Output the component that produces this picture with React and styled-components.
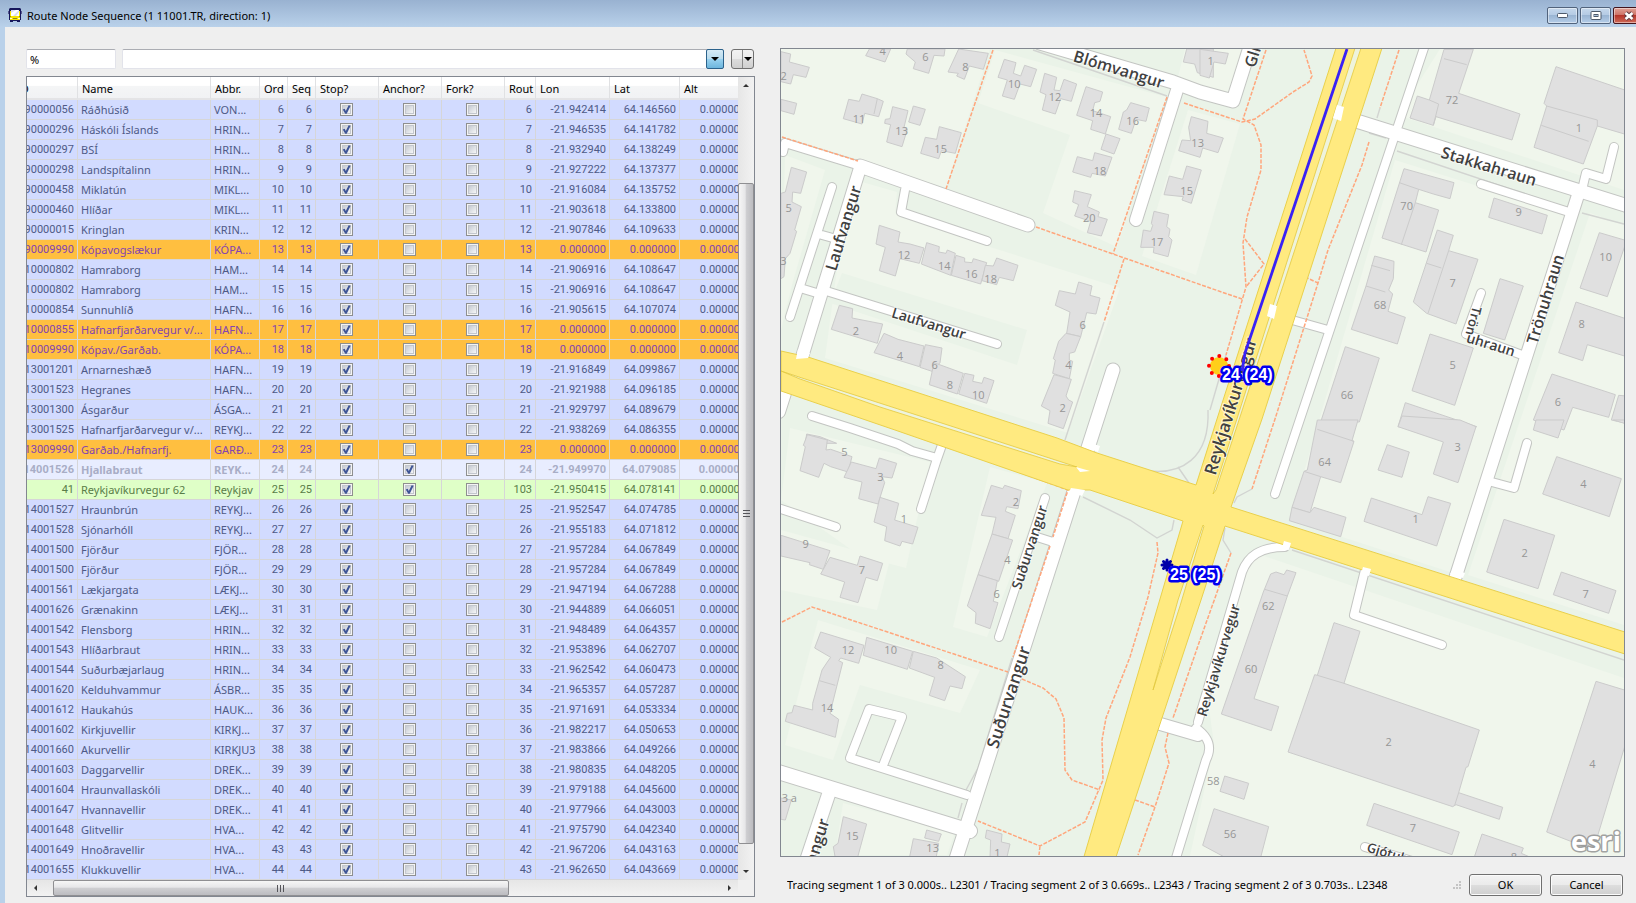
import React from 'react'
import styled, { createGlobalStyle, css } from 'styled-components'

const GlobalStyle = createGlobalStyle`
    * {
        box-sizing: border-box;
    }
    body {
        margin: 0;
        background: #efefef;
        font-family: "Noto Sans", "Open Sans", sans-serif;
        font-size: 11px;
        color: #000;
    }
    button, input, select {
        font: inherit;
        color: inherit;
    }
`;

/* ---------- window frame ---------- */

const Window = styled.div`
    display: flex;
    flex-direction: column;
    min-height: 100vh;
`;

const TitleBar = styled.header`
    display: flex;
    align-items: center;
    height: 27px;
    padding: 4px 0 0 8px;
    overflow: hidden;
    background: linear-gradient(#99b2d1, #b9d1ea);
`;

const Title = styled.h1`
    flex: 1;
    margin: 0 0 0 5px;
    font-size: 11px;
    font-weight: 400;
    line-height: 16px;
    white-space: nowrap;
`;

const WindowButtons = styled.div`
    display: flex;
    gap: 2px;
    flex: none;
    margin-right: -20px;
`;

const WindowButton = styled.button`
    display: flex;
    align-items: center;
    justify-content: center;
    width: ${({ $close }) => $close ? '43px' : '31px'};
    height: 17px;
    padding: 0 ${({ $close }) => $close ? '12px' : '0'} 0 0;
    border: 1px solid ${({ $close }) => $close ? '#43141c' : '#51637c'};
    border-radius: 2px;
    background: ${({ $close }) => $close
        ? 'linear-gradient(#e0a297 0%, #cf7468 45%, #b5352a 50%, #cf6a58 100%)'
        : 'linear-gradient(#c6d8ec 0%, #b5cbe4 45%, #9ab5d3 50%, #b4cde8 100%)'};
    box-shadow: inset 0 0 0 1px rgba(255, 255, 255, .45);
`;

const Body = styled.main`
    display: grid;
    flex: 1;
    grid-template-columns: minmax(0, 729fr) minmax(0, 845fr);
    gap: 25px;
    padding: 21px 11px 6px 21px;
    border-left: 5px solid #b9d1ea;
`;

const Panel = styled.section`
    display: flex;
    flex-direction: column;
    min-width: 0;
`;

/* ---------- filter bar ---------- */

const FilterBar = styled.div`
    display: flex;
    gap: 6px;
    padding: 1px 0 7px;
`;

const FilterInput = styled.input`
    width: 90px;
    height: 20px;
    padding: 1px 3px 0;
    border: 1px solid #e2e3ea;
    border-top-color: #abadb3;
    border-radius: 2px;
    background: #fff;
    outline: none;
`;

const Combo = styled.div`
    position: relative;
    flex: 1;
    height: 20px;
`;

const ComboSelect = styled.select`
    appearance: none;
    width: 100%;
    height: 20px;
    padding: 0 20px 0 4px;
    border: 1px solid #e2e3ea;
    border-top-color: #abadb3;
    border-radius: 2px;
    background: #fff;
    outline: none;
`;

const ComboArrow = styled.span`
    position: absolute;
    top: 0;
    right: 0;
    display: flex;
    align-items: center;
    justify-content: center;
    width: 18px;
    height: 20px;
    border: 1px solid #2c628b;
    border-radius: 2px;
    background: linear-gradient(#d6eaf5 0%, #b9dcee 48%, #98d1ef 52%, #6db6dd 100%);
    pointer-events: none;
`;

const SplitButton = styled.button`
    display: flex;
    align-items: center;
    width: 23px;
    height: 20px;
    margin: 0 1px;
    padding: 0;
    border: 1px solid #707070;
    border-radius: 3px;
    background: linear-gradient(#f2f2f2 0%, #ebebeb 48%, #dcdcdc 52%, #cfcfcf 100%);

    &:before {
        content: "";
        width: 10px;
        height: 100%;
        margin-right: 1px;
        border-right: 1px solid #8a8a8a;
    }
`;

/* ---------- grid ---------- */

const GridFrame = styled.div`
    display: grid;
    grid-template-columns: minmax(0, 1fr) 16px;
    border: 1px solid #828790;
    background: #fff;
`;

const GridView = styled.div`
    overflow: hidden;
`;

const NodeTable = styled.table`
    width: 737px;
    margin-left: -14px;
    border-collapse: separate;
    border-spacing: 0;
    table-layout: fixed;
`;

const HeadCell = styled.th`
    height: 23px;
    padding: 2px 0 0 4px;
    overflow: hidden;
    border-right: 1px solid #e0e1e3;
    border-bottom: 2px solid #e4e4e6;
    background: linear-gradient(#fff 0%, #fff 40%, #f4f5f6 45%, #f1f2f4 100%);
    font-size: 11px;
    font-weight: 400;
    line-height: 16px;
    text-align: left;
    white-space: nowrap;
`;

const Cell = styled.td`
    height: 20px;
    padding: ${({ $center }) => $center ? '0 4px 0 3px' : '0 3px'};
    overflow: hidden;
    border-right: 1px solid #d6d6d8;
    border-bottom: 1px solid #d6d6d8;
    font-family: ${({ $num }) => $num ? 'Roboto, sans-serif' : 'inherit'};
    font-size: 11px;
    line-height: 18px;
    text-align: ${({ $num }) => $num ? 'right' : 'left'};
    white-space: nowrap;
`;

const tones = {
    normal: css`
        background: #d2dbff;
        color: #4e5a86;
    `,
    missing: css`
        background: #ffbf40;
        color: #8344b0;
    `,
    current: css`
        background: #e8edff;
        color: #a8adc6;
        font-weight: 700;
    `,
    added: css`
        background: #dfffc7;
        color: #597d48;
    `,
};

const Row = styled.tr`
    ${({ $tone }) => tones[$tone]}
`;

const Check = styled.input`
    appearance: none;
    display: block;
    position: relative;
    width: 13px;
    height: 13px;
    margin: 0 auto;
    border: 1px solid #8e8f8f;
    background: linear-gradient(135deg, #b9bec8, #f4f5f6 80%);
    box-shadow: inset 0 0 0 1px #f4f4f4, inset 0 0 0 2px #c3c7ce;

    &:checked:after {
        content: "";
        position: absolute;
        inset: 1px;
        background: #3f5596;
        clip-path: polygon(8% 50%, 30% 42%, 42% 66%, 74% 4%, 96% 8%, 52% 98%, 36% 98%);
    }
`;

/* ---------- scroll bars ---------- */

const ScrollBar = styled.div`
    display: flex;
    flex-direction: ${({ $vertical }) => $vertical ? 'column' : 'row'};
    background: ${({ $vertical }) => $vertical
        ? 'linear-gradient(90deg, #e6e6e6, #f2f2f2)'
        : 'linear-gradient(#e6e6e6, #f2f2f2)'};
`;

const ScrollArrow = styled.button`
    display: flex;
    flex: none;
    align-items: center;
    justify-content: center;
    width: 16px;
    height: 16px;
    padding: 0;
    border: 0;
    background: none;
`;

const ScrollTrack = styled.div`
    display: flex;
    flex: 1;
    flex-direction: ${({ $vertical }) => $vertical ? 'column' : 'row'};
`;

const ScrollGap = styled.div`
    flex: ${({ $size }) => $size} 0 0;
`;

const ScrollThumb = styled.div`
    display: flex;
    flex: ${({ $size }) => $size} 0 0;
    align-items: center;
    justify-content: center;
    border: 1px solid #8f8f92;
    border-radius: 2px;
    background: linear-gradient(${({ $vertical }) => $vertical ? '90deg' : '180deg'}, #f6f6f6 0%, #e6e6e8 45%, #cfcfd2 50%, #bcbcc0 100%);
`;

const Corner = styled.div`
    background: #f0f0f0;
`;

/* ---------- map and footer ---------- */

const MapFrame = styled.div`
    display: flex;
    flex: 1;
    min-height: 400px;
    border: 1px solid #828790;
    background: #eaf3e8;
`;

const MapView = styled.svg`
    display: block;
    flex: 1;
    width: 0;
    min-width: 0;
    font-family: "Open Sans", "Noto Sans", sans-serif;
`;

const Footer = styled.footer`
    display: flex;
    align-items: center;
    gap: 8px;
    padding: 17px 2px 1px 7px;
`;

const Status = styled.p`
    flex: 1;
    margin: 0;
    overflow: hidden;
    line-height: 22px;
    white-space: nowrap;
`;

const DialogButton = styled.button`
    width: 73px;
    height: 22px;
    padding: 0;
    border: 1px solid #707070;
    border-radius: 3px;
    background: linear-gradient(#f3f3f3 0%, #ebebeb 48%, #dddddd 52%, #cfcfcf 100%);
    box-shadow: inset 0 0 0 1px #fbfbfb;
    line-height: 18px;
`;

/* ---------- data ---------- */

const columns = [
    ['ID', 65], ['Name', 133], ['Abbr.', 49], ['Ord', 28], ['Seq', 28], ['Stop?', 63],
    ['Anchor?', 63], ['Fork?', 63], ['Rout', 31], ['Lon', 74], ['Lat', 70], ['Alt', 70],
];

// id, name, abbreviation, order, route order, lon, lat, tone
const nodes = [
    ['90000056', 'Ráðhúsið', 'VON...', 6, 6, '-21.942414', '64.146560'],
    ['90000296', 'Háskóli Íslands', 'HRIN...', 7, 7, '-21.946535', '64.141782'],
    ['90000297', 'BSÍ', 'HRIN...', 8, 8, '-21.932940', '64.138249'],
    ['90000298', 'Landspítalinn', 'HRIN...', 9, 9, '-21.927222', '64.137377'],
    ['90000458', 'Miklatún', 'MIKL...', 10, 10, '-21.916084', '64.135752'],
    ['90000460', 'Hlíðar', 'MIKL...', 11, 11, '-21.903618', '64.133800'],
    ['90000015', 'Kringlan', 'KRIN...', 12, 12, '-21.907846', '64.109633'],
    ['90009990', 'Kópavogslækur', 'KÓPA...', 13, 13, '0.000000', '0.000000', 'missing'],
    ['10000802', 'Hamraborg', 'HAM...', 14, 14, '-21.906916', '64.108647'],
    ['10000802', 'Hamraborg', 'HAM...', 15, 15, '-21.906916', '64.108647'],
    ['10000854', 'Sunnuhlíð', 'HAFN...', 16, 16, '-21.905615', '64.107074'],
    ['10000855', 'Hafnarfjarðarvegur v/...', 'HAFN...', 17, 17, '0.000000', '0.000000', 'missing'],
    ['10009990', 'Kópav./Garðab.', 'KÓPA...', 18, 18, '0.000000', '0.000000', 'missing'],
    ['13001201', 'Arnarneshæð', 'HAFN...', 19, 19, '-21.916849', '64.099867'],
    ['13001523', 'Hegranes', 'HAFN...', 20, 20, '-21.921988', '64.096185'],
    ['13001300', 'Ásgarður', 'ÁSGA...', 21, 21, '-21.929797', '64.089679'],
    ['13001525', 'Hafnarfjarðarvegur v/...', 'REYKJ...', 22, 22, '-21.938269', '64.086355'],
    ['13009990', 'Garðab./Hafnarfj.', 'GARÐ...', 23, 23, '0.000000', '0.000000', 'missing'],
    ['14001526', 'Hjallabraut', 'REYK...', 24, 24, '-21.949970', '64.079085', 'current'],
    ['41', 'Reykjavíkurvegur 62', 'Reykjav', 25, 103, '-21.950415', '64.078141', 'added'],
    ['14001527', 'Hraunbrún', 'REYKJ...', 26, 25, '-21.952547', '64.074785'],
    ['14001528', 'Sjónarhóll', 'REYKJ...', 27, 26, '-21.955183', '64.071812'],
    ['14001500', 'Fjörður', 'FJÖR...', 28, 27, '-21.957284', '64.067849'],
    ['14001500', 'Fjörður', 'FJÖR...', 29, 28, '-21.957284', '64.067849'],
    ['14001561', 'Lækjargata', 'LÆKJ...', 30, 29, '-21.947194', '64.067288'],
    ['14001626', 'Grænakinn', 'LÆKJ...', 31, 30, '-21.944889', '64.066051'],
    ['14001542', 'Flensborg', 'HRIN...', 32, 31, '-21.948489', '64.064357'],
    ['14001543', 'Hlíðarbraut', 'HRIN...', 33, 32, '-21.953896', '64.062707'],
    ['14001544', 'Suðurbæjarlaug', 'HRIN...', 34, 33, '-21.962542', '64.060473'],
    ['14001620', 'Kelduhvammur', 'ÁSBR...', 35, 34, '-21.965357', '64.057287'],
    ['14001612', 'Haukahús', 'HAUK...', 36, 35, '-21.971691', '64.053334'],
    ['14001602', 'Kirkjuvellir', 'KIRKJ...', 37, 36, '-21.982217', '64.050653'],
    ['14001660', 'Akurvellir', 'KIRKJU3', 38, 37, '-21.983866', '64.049266'],
    ['14001603', 'Daggarvellir', 'DREK...', 39, 38, '-21.980835', '64.048205'],
    ['14001604', 'Hraunvallaskóli', 'DREK...', 40, 39, '-21.979188', '64.045600'],
    ['14001647', 'Hvannavellir', 'DREK...', 41, 40, '-21.977966', '64.043003'],
    ['14001648', 'Glitvellir', 'HVA...', 42, 41, '-21.975790', '64.042340'],
    ['14001649', 'Hnoðravellir', 'HVA...', 43, 42, '-21.967206', '64.043163'],
    ['14001655', 'Klukkuvellir', 'HVA...', 44, 43, '-21.962650', '64.043669'],
];

const blocks = [
    '781,49 990,49 946,188 860,160 781,136',
    '995,50 1166,97 1117,247 1043,213 1070,135 978,103',
    '862,182 897,192 895,213 990,247 1120,288 1068,433 825,358 838,262',
    '1185,49 1243,49 1228,93 1178,77',
    '1188,110 1240,124 1196,275 1142,256',
    '785,155 825,170 792,285 781,330',
    '790,428 930,462 906,568 860,556 781,500',
    '781,530 890,560 877,610 781,590',
    '990,467 1047,483 987,637 953,627',
    '818,620 980,670 960,713 860,685 833,760 785,745',
    '843,803 955,833 947,855 835,855',
    '1440,49 1624,49 1624,190 1398,115',
    '1395,160 1570,215 1450,572 1290,520',
    '1590,213 1624,225 1624,625 1468,575',
    '1252,552 1624,678 1624,856 1190,856 1214,745 1208,700',
];

const greens = ['842,273 1027,330 1017,365 830,303'];

// [path, width]
const streets = [
    ['M1040 43 1173 82 1200 92 1233 101 1251 44', 13],
    ['M1177 90 1136 220', 12],
    ['M783 152 785 143 857 165', 8],
    ['M860 166 1028 225', 13],
    ['M860 168 802 357', 12],
    ['M832 187 790 317M822 235 840 240M800 288 820 294', 8],
    ['M905 190 901 212 987 241', 8],
    ['M823 290 997 344', 8],
    ['M1113 370 955 862', 13],
    ['M786 390 779 412', 12],
    ['M812 416 850 428 898 444 912 451 937 458M943 442 936 462 921 509', 8],
    ['M778 508 836 527', 8],
    ['M1045 498 999 637M1037 537 1056 543', 8],
    ['M967 795 850 758 869 709 902 717 884 763', 8],
    ['M778 772 970 831', 14],
    ['M830 790 806 862', 13],
    ['M1425 45 1275 494', 8],
    ['M1350 119 1628 206', 13],
    ['M1582 190 1586 173 1606 179 1614 147', 8],
    ['M1578 195 1454 582', 12],
    ['M1481 184 1572 213', 8],
    ['M1481 293 1466 334 1522 355', 8],
    ['M1285 318 1328 330', 8],
    ['M1527 443 1514 488 1488 481', 8],
    ['M1367 562 1354 615 1442 645', 8],
    ['M1288 538 1285 547C1260 547 1248 556 1242 572L1198 722M1196 728C1210 738 1212 748 1206 760L1176 858', 8],
    ['M1150 721 1198 735', 12],
    ['M1365 847 1412 861', 8],
];

const mainRoads = [
    '781,351 808,357 1057,438 1097,453 1196,485 1217,419 1337,45 1383,45 1262,419 1231,507 1628,633 1628,655 1225,526 1201,600 1115,860 1083,860 1183,521 1090,490 1068,490 895,430 781,391',
];

const medians = [
    '1356,45 1362,45 1216,490 1213,494',
    '781,371 802,378 957,428 1077,467 1060,464 880,407 800,379',
    '1203,525 1204,526 1180,606 1153,690 1178,600',
];

const footpaths = [
    'M993 50 946 189', 'M782 137 858 161', 'M1167 97 1113 254', 'M1036 227 1113 254 1210 288 1242 299',
    'M1124 259 1104 322', 'M1184 103 1242 122 1255 119 1293 92 1309 82 1312 76 1304 50',
    'M1266 50 1243 119 1254 125 1261 145 1261 170 1247 217 1243 243 1246 287 1226 355',
    'M1245 239 1264 264 1246 287', 'M1399 50 1380 108', 'M1369 142 1362 165 1328 250 1318 283 1275 419 1252 489',
    'M1305 277 1318 283', 'M782 622 812 607 1008 672', 'M1022 679 1043 688 1056 699 1064 718 1065 770 1072 780 1100 790',
    'M967 453 1068 490 1053 537M1050 546 1013 657', 'M1157 542 1158 553 1148 597 1130 657 1106 718 1102 740 1103 780 1085 822 1040 846 978 821M1040 846 1039 855',
    'M1231 553 1200 640 1173 718', 'M1168 733 1165 747 1169 763 1155 807 1138 855', 'M1135 800 1155 807',
];

const trails = [
    'M1033 50 1167 96', 'M1104 322 1065 440', 'M1208 410C1210 460 1180 474 1150 471M1178 467 1189 483',
    'M1083 497 1130 520 1157 538 1172 530 1174 520', 'M1397 151 1567 208M1582 213 1624 224', 'M1292 550 1624 660',
    'M1380 108 1377 118M1369 133 1386 138', 'M1252 489 1237 497 1234 503', 'M1231 553 1223 540 1225 528', 'M1226 355 1210 410',
    'M1012 658 978 768 966 790', 'M962 803 958 818',
];

const sheets = [
    {
        x: 770, y: 40,
        buildings: [
            '33,35 62,42 58,66 118,82 108,112 70,104 62,132 33,125', '33,178 80,190 72,223 33,212', '298,27 362,27 345,66 287,47',
            '412,27 525,27 522,48 492,46 476,100 430,86 436,66 408,42', '566,27 655,40 640,88 598,78 583,118 560,108 565,100 534,96',
            '703,58 738,68 730,100 752,108 764,76 800,88 782,140 750,132 733,178 697,168 712,120 684,112',
            '824,100 860,112 852,150 870,152 882,118 920,132 904,184 872,176 856,222 817,210 828,164 810,156',
            '948,140 998,156 990,184 974,188 968,212 1022,230 1006,282 962,268 968,242 920,226', '1008,282 1050,296 1032,342 993,328',
            '1082,188 1138,204 1128,244 1098,238 1084,280 1046,268 1060,216 1070,210', '1250,27 1330,27 1330,112 1282,98 1274,72 1240,66',
            '1264,230 1314,244 1310,280 1360,294 1344,338 1298,324 1290,352 1226,332 1236,300 1262,302 1256,262',
            '1250,378 1294,390 1264,490 1236,480 1240,470 1182,464 1198,408 1238,418',
            '1152,514 1196,524 1190,560 1200,568 1196,590 1206,600 1194,650 1150,638 1152,622 1112,622 1120,570 1142,574 1148,556 1144,550',
            '974,338 1026,352 1006,408 966,400 962,412 908,396 922,350 968,362',
            '914,452 964,464 952,500 988,516 984,530 1012,538 994,588 952,578 962,544 914,528 926,494 908,486',
            '276,162 322,176 340,184 326,230 284,220 276,252 220,236 236,178 268,184',
            '368,200 414,212 402,262 412,268 396,320 350,306 362,254 344,250 346,238 360,236', '430,198 466,208 450,256 416,246',
            '508,260 574,278 556,340 514,332 506,356 452,340 466,292 500,298',
            '64,382 110,396 92,460 68,456 66,486 94,500 74,570 80,574 60,640 46,656 42,710 33,716 33,460 46,456',
            '328,556 390,576 384,606 420,612 462,624 448,670 390,656 376,708 328,692 346,622 318,612',
            '470,608 508,620 506,636 528,640 532,630 556,640 542,706 454,672', '558,646 584,654 584,666 606,668 610,656 650,668 632,732 544,706',
            '646,676 670,678 680,654 744,676 730,722 688,712 680,734 636,722', '208,796 248,806 246,834 338,852 322,910 184,868',
            '342,880 384,898 462,918 448,980 312,938', '466,914 516,924 510,968 486,994 450,982', '492,968 580,1000 562,1062 478,1034',
            '584,1000 612,1006 608,1024 636,1030 642,1012 672,1022 650,1090 566,1062',
            '926,726 966,738 960,766 990,774 978,822 950,818 932,890 890,880 900,816 856,796 868,752 916,762',
            '888,880 932,890 914,936 898,940 898,960 908,964 898,1016 848,1000 856,960 850,956 866,904', '852,1004 904,1018 888,1068 896,1080 908,1086 880,1166 834,1150 840,1112 814,1098',
            '110,1182 150,1190 200,1210 106,1210',
        ],
        walls: ['322,176 312,222'],
        numbers: [
            ['2', 41, 106], ['4', 338, 32], ['6', 466, 48], ['8', 586, 78], ['10', 733, 131], ['12', 855, 170], ['14', 978, 216], ['16', 1088, 242],
            ['13', 1283, 306], ['15', 1250, 450], ['17', 1161, 605], ['18', 990, 392], ['20', 958, 532], ['11', 267, 234], ['13', 395, 272],
            ['15', 512, 325], ['5', 56, 502], ['3', 40, 662], ['12', 402, 642], ['14', 523, 675], ['16', 604, 700], ['18', 662, 714],
            ['2', 258, 870], ['4', 390, 946], ['6', 494, 974], ['8', 540, 1032], ['10', 625, 1062], ['6', 938, 854], ['4', 895, 974], ['2', 878, 1102],
        ],
    },
    {
        x: 1200, y: 0,
        buildings: [
            '0,148 85,160 76,192 42,186 28,234 0,226', '732,148 820,148 776,280 960,342 936,420 708,350 700,376 630,354 652,288 688,300',
            '1068,200 1280,272 1280,404 1192,378 1150,492 1002,442 1040,318 1032,310', '612,506 762,548 750,596 700,582 656,568 646,608 716,630 678,756 546,714',
            '882,594 1042,646 1026,702 866,652', '712,690 760,706 746,752 834,778 768,972 680,940 640,906',
            '524,768 582,784 580,836 566,870 578,882 564,934 616,952 592,1032 454,988 498,858', '900,836 970,858 914,1020 850,1000',
            '1198,698 1280,722 1222,890 1140,864', '1128,906 1280,957 1280,1070 1162,1034 1148,1082 1076,1058', '690,1002 820,1044 764,1216 636,1172',
            '436,1040 538,1074 478,1266 362,1266', '1056,1122 1246,1184 1226,1252 1118,1222 1092,1290 1000,1260', '1256,1186 1280,1188 1280,1270 1234,1260',
            '616,1208 830,1280 770,1290 594,1280',
        ],
        walls: [
            '732,176 800,194', '688,300 716,312 700,376', '1040,318 1192,360 1192,378', '1024,376 1166,424', '646,608 604,734', '598,548 656,568',
            '680,790 724,804', '746,752 684,940', '498,858 556,876', '514,796 570,812',
        ],
        numbers: [
            ['1', 32, 181], ['72', 756, 297], ['1', 1137, 382], ['70', 620, 616], ['9', 956, 635], ['7', 758, 848], ['68', 540, 912], ['10', 1217, 768],
            ['8', 1145, 969], ['5', 758, 1094], ['66', 441, 1183], ['6', 1074, 1203],
        ],
    },
    {
        x: 770, y: 430,
        buildings: [
            '112,14 172,30 168,60 182,58 246,80 234,126 182,110 162,100 146,142 90,122 106,50 100,46',
            '244,96 318,116 328,84 380,100 366,144 336,140 344,158 324,222 266,206 276,156 222,142',
            '330,202 386,220 374,270 444,292 428,342 396,334 390,348 344,332 350,290 312,276', '33,316 180,362 160,418 118,404 120,398 33,378',
            '180,382 262,406 270,378 338,400 322,452 288,442 264,518 210,502 224,456 152,432',
            '664,166 698,176 704,166 754,182 744,236 710,230 706,244 736,256 714,326 666,312 678,262 634,256', '666,312 728,330 686,454 624,434',
            '624,434 682,452 670,514 684,518 660,596 616,580 618,548 592,528', '152,606 282,646 266,700 212,684 206,692 218,698 180,850 206,868 196,922 46,874 52,850 66,848 72,826 128,840 128,820 156,720 172,696 182,682 134,654',
            '290,622 428,664 412,718 280,676', '430,664 500,684 586,740 576,776 540,768 524,812 478,796 494,742 418,714',
            '33,1104 64,1110 46,1170 33,1168', '220,1160 290,1182 262,1285 196,1285 190,1250 204,1240', '470,1200 514,1212 506,1234 464,1224',
            '430,1226 506,1240 498,1285 418,1285', '650,1200 696,1212 694,1236 720,1242 710,1285 660,1285 662,1230 646,1224',
        ],
        walls: ['148,752 196,766'],
        numbers: [
            ['5', 223, 64], ['3', 331, 139], ['1', 402, 265], ['9', 107, 341], ['7', 276, 418], ['2', 738, 213], ['4', 712, 387], ['6', 680, 490],
            ['12', 234, 658], ['10', 362, 657], ['8', 512, 703], ['14', 171, 832], ['3 a', 58, 1102], ['15', 247, 1215], ['13', 488, 1252], ['1', 682, 1266],
        ],
    },
    {
        x: 1200, y: 420,
        buildings: [
            '352,0 474,0 456,62 462,64 422,188 362,170 330,278 276,262 312,154 322,150', '276,262 330,278 342,262 438,292 422,350 268,302',
            '562,74 628,96 606,172 534,150', '606,-12 780,0 828,20 774,188 700,162 730,66 594,20', '514,234 666,284 684,230 752,250 710,378 492,304',
            '1008,0 1092,0 1074,54 1000,30', '1070,110 1264,176 1228,290 1028,222', '912,298 1064,346 1014,506 860,456', '1084,456 1248,512 1226,580 1060,524',
            '212,462 228,456 252,464 260,450 288,458 262,528 162,836 236,860 214,932 64,882 190,516',
            '402,608 480,634 432,790 838,930 804,1040 798,1042 776,1118 908,1162 898,1198 768,1154 758,1160 264,996 344,764 352,766',
            '74,1068 146,1090 132,1138 60,1114', '42,1166 206,1220 180,1320 90,1320 8,1276', '522,1150 778,1236 756,1304 500,1216',
            '1188,784 1280,812 1280,960 1180,1290 1040,1236', '846,1242 970,1284 964,1300 1010,1320 820,1320', '1240,0 1280,0 1280,12',
        ],
        walls: ['352,28 462,64', '312,154 362,170', '194,508 262,528', '352,766 432,790', '776,1118 764,1156'],
        numbers: [
            ['64', 374, 124], ['3', 773, 78], ['1', 647, 294], ['4', 1150, 191], ['2', 974, 396], ['7', 1157, 520], ['62', 205, 557], ['60', 153, 745],
            ['2', 566, 965], ['4', 1177, 1031], ['58', 40, 1081], ['56', 90, 1239], ['7', 639, 1223], ['8', 942, 1308],
        ],
    },
];

// text, x, y, angle, size
const streetNames = [
    ['Blómvangur', 1119, 69, 17, 16],
    ['Laufvangur', 843, 228, -73, 16],
    ['Laufvangur', 929, 323, 17, 14],
    ['Glitvangur', 1261, 28, -73, 16],
    ['Stakkahraun', 1489, 166, 17, 16],
    ['Trönuhraun', 1545, 299, -73, 16],
    ['Trön', 1474, 321, 104, 13],
    ['uhraun', 1491, 344, 17, 14],
    ['Reykjavíkurvegur', 1230, 406, -73, 17],
    ['Suðurvangur', 1029, 547, -72, 14],
    ['Suðurvangur', 1008, 697, -72, 17],
    ['Reykjavíkurvegur', 1218, 660, -73, 14],
    ['Laufvangur', 811, 861, -73, 16],
    ['Gjótuhraun', 1402, 857, 17, 13],
];

/* ---------- pieces ---------- */

const BusIcon = () => (
    <svg width="14" height="15" viewBox="0 0 14 15" aria-hidden="true">
        <path d="M2 0h10l1 1v11h-1v2H9v-1H5v1H2v-2H1V1z" fill="#17175c" />
        <path d="M0 3h1v3H0zM13 3h1v3h-1z" fill="#55558a" />
        <path d="M2 3h1v5h8V3h1v9H2z" fill="#f7e600" />
        <path d="M3 2h8v6H3z" fill="#d9dcf0" />
        <path d="M3 8V5l5-3h3L5 8zM8 8l3-4v4z" fill="#fff" />
        <path d="M5 10h4v1H5zM2 8h1v1H2zM11 8h1v1h-1z" fill="#8a8420" />
        <path d="M2 10h2v1H2zM10 10h2v1h-2z" fill="#fffde0" />
    </svg>
);

const DownArrow = () => (
    <svg width="8" height="4" viewBox="0 0 8 4" aria-hidden="true">
        <path d="M0 0h8L4 4z" fill="#000" />
    </svg>
);

const arrowPaths = {
    up: 'M1 6 4 3l3 3z',
    down: 'M1 2h6L4 5z',
    left: 'M6 1v6L3 4z',
    right: 'M2 1v6l3-3z',
};

const Arrow = ({ dir }) => (
    <ScrollArrow aria-label={`Scroll ${dir}`}>
        <svg width="8" height="8" viewBox="0 0 8 8" aria-hidden="true">
            <path d={arrowPaths[dir]} fill="#333" />
        </svg>
    </ScrollArrow>
);

const Grip = ({ vertical }) => (
    <svg width="9" height="9" viewBox="0 0 9 9" aria-hidden="true">
        <path d={vertical ? 'M1 1.5h7M1 4.5h7M1 7.5h7' : 'M1.5 1v7M4.5 1v7M7.5 1v7'} stroke="#55555a" />
    </svg>
);

const Scroller = ({ vertical, before, size, after }) => (
    <ScrollBar $vertical={vertical}>
        <Arrow dir={vertical ? 'up' : 'left'} />
        <ScrollTrack $vertical={vertical}>
            <ScrollGap $size={before} />
            <ScrollThumb $vertical={vertical} $size={size}><Grip vertical={vertical} /></ScrollThumb>
            <ScrollGap $size={after} />
        </ScrollTrack>
        <Arrow dir={vertical ? 'down' : 'right'} />
    </ScrollBar>
);

const CheckCell = ({ label, checked }) => (
    <Cell $center>
        <Check type="checkbox" aria-label={label} defaultChecked={checked} />
    </Cell>
);

const NodeRow = ({ node }) => {
    const [id, name, abbr, order, routeOrder, lon, lat, tone = 'normal'] = node
    return (
        <Row $tone={tone}>
            <Cell $num>{id}</Cell>
            <Cell>{name}</Cell>
            <Cell>{abbr}</Cell>
            <Cell $num>{order}</Cell>
            <Cell $num>{order}</Cell>
            <CheckCell label={`${name} stop`} checked />
            <CheckCell label={`${name} anchor`} checked={tone === 'current' || tone === 'added'} />
            <CheckCell label={`${name} fork`} checked={false} />
            <Cell $num>{routeOrder}</Cell>
            <Cell $num>{lon}</Cell>
            <Cell $num>{lat}</Cell>
            <Cell $num>0.000000</Cell>
        </Row>
    )
}

const Sheet = ({ sheet }) => (
    <g transform={`translate(${sheet.x} ${sheet.y}) scale(${1 / 3})`} strokeWidth="3" stroke="#cbcbcb" strokeLinejoin="round">
        {sheet.buildings.map((points) => <polygon key={points} points={points} fill="#e0e0e0" />)}
        {sheet.walls.map((points) => <polyline key={points} points={points} fill="none" />)}
    </g>
);

const MapMarker = ({ x, y, children }) => (
    <text
        x={x} y={y} fontFamily="Liberation Sans, sans-serif" fontSize="16" fontWeight="700"
        fill="#fff" stroke="#0000f0" strokeWidth="5" strokeLinejoin="round" paintOrder="stroke"
    >
        {children}
    </text>
);

const RouteMap = () => (
    <MapView viewBox="781 49 843 807" preserveAspectRatio="xMidYMid slice" role="img" aria-label="Route map">
        <rect x="700" y="0" width="1000" height="900" fill="#eaf3e8" />
        {blocks.map((points) => <polygon key={points} points={points} fill="#f0f6ec" />)}
        {greens.map((points) => <polygon key={points} points={points} fill="#eaf3e8" />)}
        <g fill="none" stroke="#d2d4d1" strokeWidth="1.4">
            {trails.map((d) => <path key={d} d={d} />)}
        </g>
        {sheets.map((sheet) => <Sheet key={`${sheet.x}-${sheet.y}`} sheet={sheet} />)}
        <g fill="none" stroke="#c3c5c2" strokeLinecap="round" strokeLinejoin="round">
            {streets.map(([d, width]) => <path key={d} d={d} strokeWidth={width + 2} />)}
        </g>
        <g fill="none" stroke="#fff" strokeLinecap="round" strokeLinejoin="round">
            {streets.map(([d, width]) => <path key={d} d={d} strokeWidth={width} />)}
        </g>
        <g fill="none" stroke="#ffa67c" strokeWidth="1.5" strokeDasharray="4 1.5">
            {footpaths.map((d) => <path key={d} d={d} />)}
        </g>
        {mainRoads.map((points) => <polygon key={points} points={points} fill="#ffea80" stroke="#e9d04c" />)}
        {medians.map((points) => <polygon key={points} points={points} fill="#eef3dc" stroke="#e3c93e" strokeWidth=".8" />)}
        <g fill="#fff">
            <path d="M1337 105l7 2-3 14-8-3zM1270 304l7 2-3 13-7-3zM1076 467l14 4-10 1z" />
            <path d="M1071 488l14 2-3 6-13-4zM1084 447l14 5 2-6-13-4zM796 359l12-1 2-5-12-4zM1450 574l13 4 2-5-12-4zM1284 541l7 2-2 7-7-2zM1363 567l8 2-2 7-8-2z" />
        </g>

        <g fontSize="11" fill="#969696" textAnchor="middle">
            {sheets.map((sheet) => sheet.numbers.map(([text, x, y]) => (
                <text key={`${x}-${y}`} x={sheet.x + x / 3} y={sheet.y + y / 3} dominantBaseline="central">{text}</text>
            )))}
        </g>
        <g fontWeight="600" fill="#404040" stroke="#fff" strokeOpacity=".6" strokeWidth="2" paintOrder="stroke" textAnchor="middle">
            {streetNames.map(([text, x, y, angle, size]) => (
                <text key={`${x}-${y}`} fontSize={size} dominantBaseline="central" transform={`translate(${x} ${y}) rotate(${angle})`}>{text}</text>
            ))}
        </g>

        <path d="M1347 49 1245 353 1242 371" fill="none" stroke="#3a22f5" strokeWidth="2.8" />

        <circle cx="1219" cy="366" r="9" fill="#ffcf1a" />
        <circle cx="1219" cy="366" r="10" fill="none" stroke="#f00" strokeWidth="4" strokeLinecap="round" strokeDasharray="0 7.854" />
        <MapMarker x="1222" y="380">24 (24)</MapMarker>
        <path d="M1167 560v10M1162 565h10M1163.500 561.500l7 7M1170.500 561.500l-7 7" stroke="#0000a8" strokeWidth="3" strokeLinecap="round" />
        <MapMarker x="1170" y="580">25 (25)</MapMarker>

        <text x="1571" y="851" fontSize="27" fontWeight="700" fill="#fff" stroke="#8c8c8c" strokeWidth="3" strokeLinejoin="round" strokeOpacity=".8" paintOrder="stroke">esri</text>
    </MapView>
);

const SizeGrip = () => (
    <svg width="8" height="8" viewBox="0 0 8 8" aria-hidden="true">
        <path d="M6 0h2v2H6zM3 3h2v2H3zM6 3h2v2H6zM0 6h2v2H0zM3 6h2v2H3zM6 6h2v2H6z" fill="#c4c4c4" />
    </svg>
);

const App = () => (
    <>
        <GlobalStyle />
        <Window>
            <TitleBar>
                <BusIcon />
                <Title>Route Node Sequence (1 11001.TR, direction: 1)</Title>
                <WindowButtons>
                    <WindowButton aria-label="Minimize">
                        <svg width="12" height="5" viewBox="0 0 12 5"><rect x=".5" y=".5" width="10" height="4" rx="1" fill="#fff" stroke="#4e5a6b" /></svg>
                    </WindowButton>
                    <WindowButton aria-label="Maximize">
                        <svg width="12" height="9" viewBox="0 0 12 9">
                            <rect x="1" y=".5" width="10" height="8" rx="1" fill="#fff" stroke="#4e5a6b" />
                            <rect x="4" y="3.500" width="4" height="2" fill="#a9c0da" stroke="#4e5a6b" />
                        </svg>
                    </WindowButton>
                    <WindowButton $close aria-label="Close">
                        <svg width="12" height="10" viewBox="0 0 12 10">
                            <path d="M2.500 2l7 6M9.500 2l-7 6" stroke="#5a3a40" strokeWidth="4.400" />
                            <path d="M2.500 2l7 6M9.500 2l-7 6" stroke="#fff" strokeWidth="2.600" />
                        </svg>
                    </WindowButton>
                </WindowButtons>
            </TitleBar>
            <Body>
                <Panel>
                    <FilterBar>
                        <FilterInput aria-label="Filter" defaultValue="%" />
                        <Combo>
                            <ComboSelect aria-label="Node" defaultValue=""><option value=""></option></ComboSelect>
                            <ComboArrow><DownArrow /></ComboArrow>
                        </Combo>
                        <SplitButton aria-label="More actions"><DownArrow /></SplitButton>
                    </FilterBar>
                    <GridFrame>
                        <GridView>
                            <NodeTable>
                                <colgroup>
                                    {columns.map(([title, width]) => <col key={title} width={width} />)}
                                </colgroup>
                                <thead>
                                    <tr>{columns.map(([title]) => <HeadCell key={title} scope="col">{title}</HeadCell>)}</tr>
                                </thead>
                                <tbody>
                                    {nodes.map((node) => <NodeRow key={node[3]} node={node} />)}
                                </tbody>
                            </NodeTable>
                        </GridView>
                        <Scroller vertical before={90} size={661} after={20} />
                        <Scroller before={10} size={455} after={214} />
                        <Corner />
                    </GridFrame>
                </Panel>
                <Panel>
                    <MapFrame>
                        <RouteMap />
                    </MapFrame>
                    <Footer>
                        <Status role="status">
                            Tracing segment 1 of 3 0.000s.. L2301 / Tracing segment 2 of 3 0.669s.. L2343 / Tracing segment 2 of 3 0.703s.. L2348
                        </Status>
                        <SizeGrip />
                        <DialogButton>OK</DialogButton>
                        <DialogButton>Cancel</DialogButton>
                    </Footer>
                </Panel>
            </Body>
        </Window>
    </>
);

export default App;
